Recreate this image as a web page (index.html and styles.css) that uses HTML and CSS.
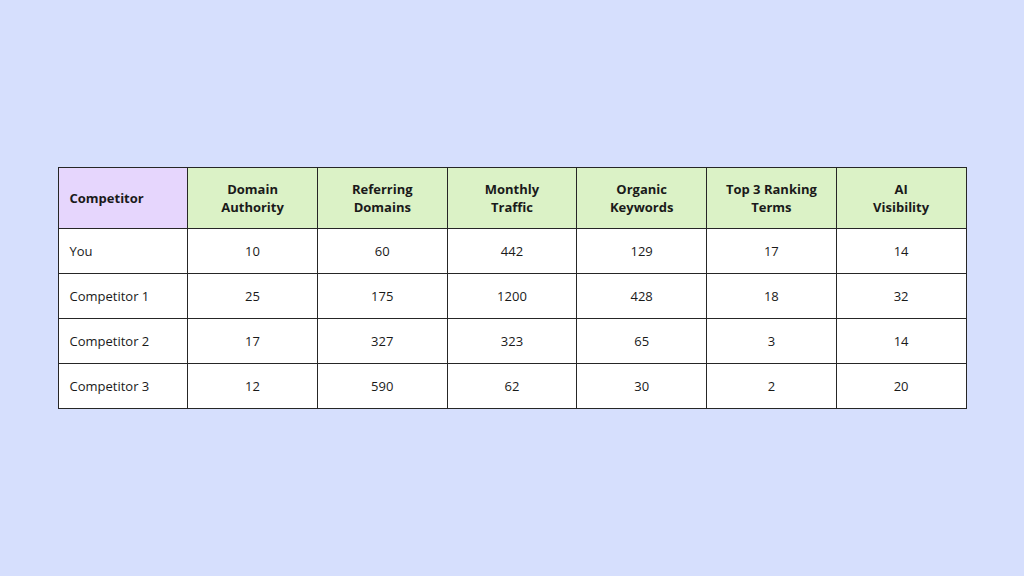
FILE: index.html
```html
<!DOCTYPE html>
<html>
<head>
<meta charset="utf-8">
<link rel="stylesheet" href="styles.css">
</head>
<body>
<main class="page">
  <table class="grid">
    <thead>
      <tr>
        <th class="name-head">Competitor</th>
        <th>Domain<br>Authority</th>
        <th>Referring<br>Domains</th>
        <th>Monthly<br>Traffic</th>
        <th>Organic<br>Keywords</th>
        <th>Top 3 Ranking<br>Terms</th>
        <th>AI<br>Visibility</th>
      </tr>
    </thead>
    <tbody>
      <tr><td class="name">You</td><td>10</td><td>60</td><td>442</td><td>129</td><td>17</td><td>14</td></tr>
      <tr><td class="name">Competitor 1</td><td>25</td><td>175</td><td>1200</td><td>428</td><td>18</td><td>32</td></tr>
      <tr><td class="name">Competitor 2</td><td>17</td><td>327</td><td>323</td><td>65</td><td>3</td><td>14</td></tr>
      <tr><td class="name">Competitor 3</td><td>12</td><td>590</td><td>62</td><td>30</td><td>2</td><td>20</td></tr>
    </tbody>
  </table>
</main>
</body>
</html>
```
FILE: styles.css
```css
html, body {
  margin: 0;
  padding: 0;
}
body {
  background: #d6dffd;
  font-family: "Open Sans", "Noto Sans", sans-serif;
  color: #1a1a1a;
}
.page {
  width: 1024px;
  height: 576px;
  display: flex;
  align-items: center;
  justify-content: center;
}
.grid {
  border-collapse: collapse;
  table-layout: fixed;
  width: 909px;
  font-size: 13px;
}
.grid th, .grid td {
  border: 1px solid #262626;
  text-align: center;
  width: 129px;
}
.grid th {
  background: #dbf2c6;
  font-weight: 700;
  height: 61px;
  padding: 0 8px;
  line-height: 18px;
  box-sizing: border-box;
}
.grid th.name-head {
  background: #e6d6fd;
  text-align: left;
  padding-left: 11px;
}
.grid td {
  background: #ffffff;
  height: 45px;
  padding: 0 8px;
  box-sizing: border-box;
}
.grid td.name {
  text-align: left;
  padding-left: 11px;
}
```
